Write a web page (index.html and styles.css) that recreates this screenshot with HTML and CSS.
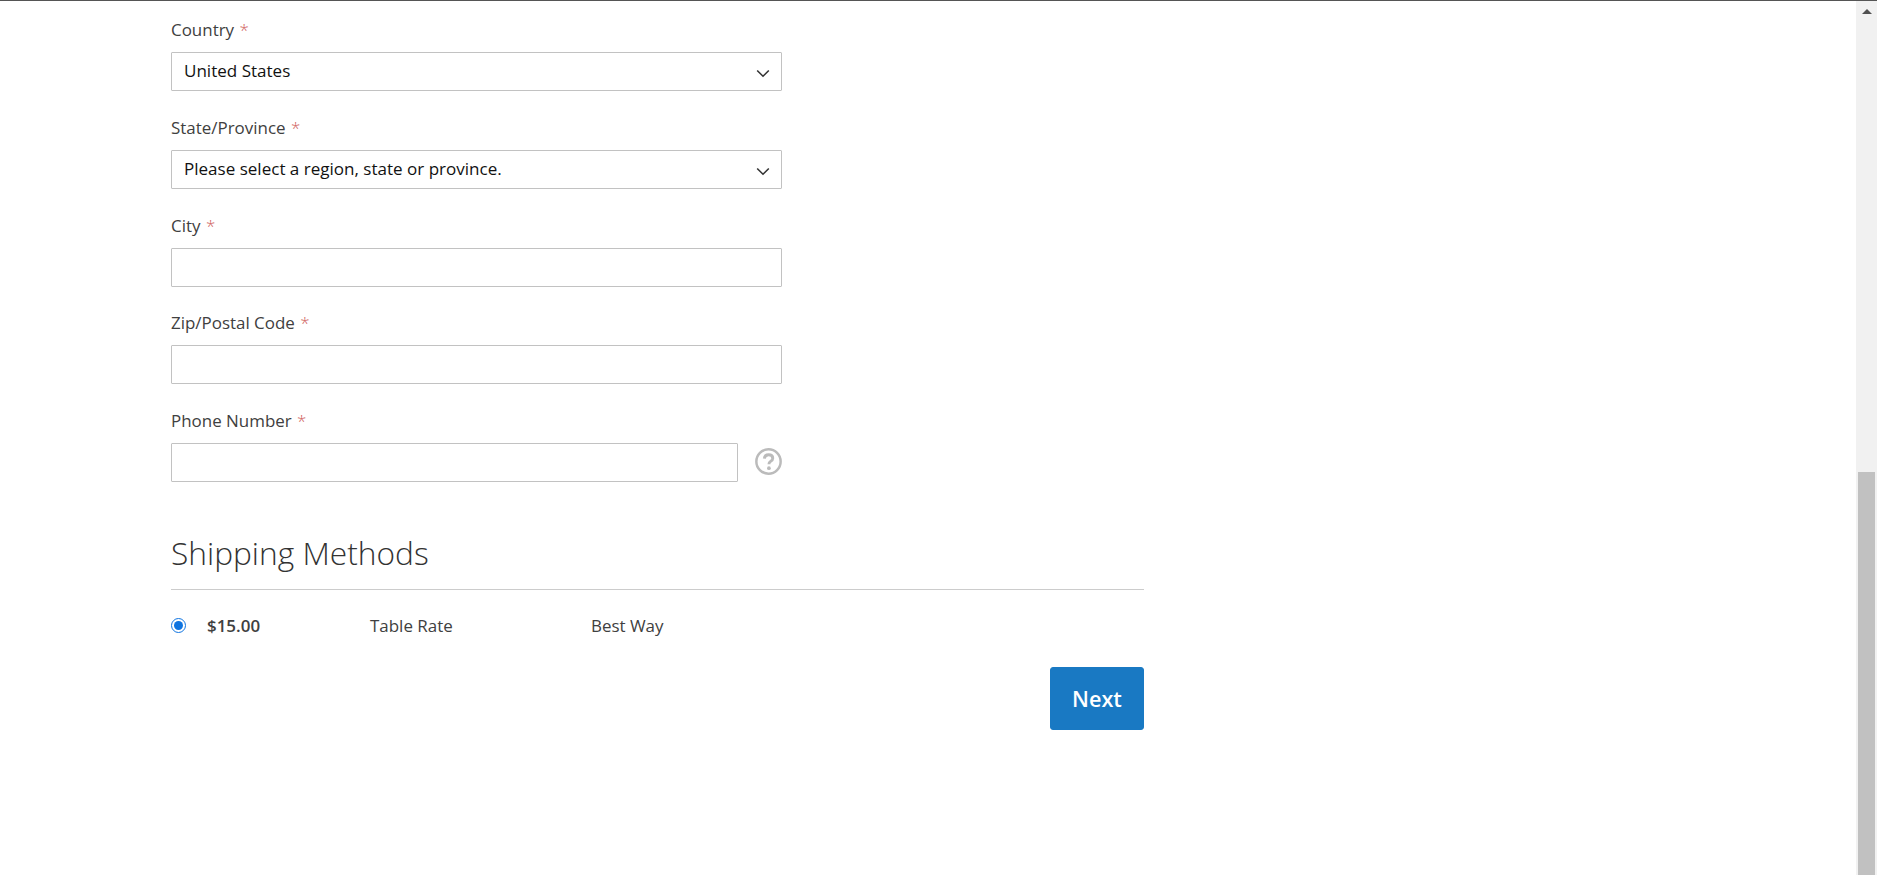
FILE: index.html
```html
<!DOCTYPE html>
<html lang="en">
<head>
    <meta charset="UTF-8">
    <title>Checkout</title>
    <link rel="stylesheet" href="styles.css">
</head>
<body>
    <div class="page">
        <main class="checkout">
            <form class="address-form">
                <div class="field">
                    <label class="field-label" for="country">Country <span class="req">*</span></label>
                    <div class="select-wrap">
                        <select id="country"><option>United States</option></select>
                        <svg class="chevron" viewBox="0 0 14 9"><path d="M1.2 1.5 7 7.2l5.8-5.7" fill="none" stroke="#333" stroke-width="1.6"/></svg>
                    </div>
                </div>
                <div class="field">
                    <label class="field-label" for="region">State/Province <span class="req">*</span></label>
                    <div class="select-wrap">
                        <select id="region"><option>Please select a region, state or province.</option></select>
                        <svg class="chevron" viewBox="0 0 14 9"><path d="M1.2 1.5 7 7.2l5.8-5.7" fill="none" stroke="#333" stroke-width="1.6"/></svg>
                    </div>
                </div>
                <div class="field">
                    <label class="field-label" for="city">City <span class="req">*</span></label>
                    <input id="city" type="text">
                </div>
                <div class="field">
                    <label class="field-label" for="zip">Zip/Postal Code <span class="req">*</span></label>
                    <input id="zip" type="text">
                </div>
                <div class="field">
                    <label class="field-label" for="phone">Phone Number <span class="req">*</span></label>
                    <div class="phone-row">
                        <input id="phone" type="text">
                        <svg class="help" viewBox="0 0 26 26">
                            <circle cx="13" cy="13" r="11.7" fill="none" stroke="#bbb" stroke-width="2.4"/>
                            <path d="M9 10.2c.2-2.400 1.900-3.700 4.100-3.700 2.300 0 4 1.300 4 3.300 0 1.600-1 2.400-2.100 3.100-1 .7-1.600 1.300-1.600 2.800" fill="none" stroke="#bbb" stroke-width="2.800"/>
                            <circle cx="13.400" cy="19.400" r="1.800" fill="#bbb"/>
                        </svg>
                    </div>
                </div>
            </form>

            <section class="shipping">
                <h2>Shipping Methods</h2>
                <div class="method-row">
                    <input class="method-radio" type="radio" name="method" checked>
                    <span class="method-price">$15.00</span>
                    <span class="method-name">Table Rate</span>
                    <span class="method-carrier">Best Way</span>
                </div>
                <div class="actions">
                    <button type="button" class="next-btn">Next</button>
                </div>
            </section>
        </main>

        <div class="scrollbar">
            <div class="scroll-up"></div>
            <div class="scroll-thumb"></div>
        </div>
    </div>
</body>
</html>
```

FILE: styles.css
```css
* {
    margin: 0;
    padding: 0;
    box-sizing: border-box;
}

html, body {
    height: 100%;
    overflow: hidden;
}

body {
    background: #fff;
    font-family: 'Open Sans', sans-serif;
    font-size: 16.95px;
    color: #404040;
}

.page {
    display: flex;
    height: 100vh;
    border-top: 1px solid #555;
}

.checkout {
    flex: 1;
    padding: 17px 0 0 171px;
}

.address-form {
    width: 611px;
}

.field {
    margin-bottom: 24.8px;
}

.field:last-child {
    margin-bottom: 0;
}

.field-label {
    display: block;
    line-height: 24px;
    margin-bottom: 10px;
}

.req {
    color: #d0605c;
    font-weight: 300;
    margin-left: 1px;
}

select, input[type="text"] {
    display: block;
    width: 100%;
    height: 39px;
    border: 1px solid #c2c2c2;
    background: #fff;
    font-family: 'Open Sans', sans-serif;
    font-size: 17.05px;
    color: #111;
    border-radius: 1px;
    outline: none;
}

select {
    appearance: none;
    padding: 0 30px 2px 12px;
}

.select-wrap {
    position: relative;
}

.chevron {
    position: absolute;
    top: 17px;
    right: 12px;
    width: 14px;
    height: 9px;
}

.phone-row {
    display: flex;
    align-items: center;
    gap: 17px;
}

.phone-row input {
    flex: 1;
    min-width: 0;
}

.help {
    width: 27px;
    height: 27px;
    flex: none;
    margin-bottom: 2px;
}

.shipping {
    width: 973px;
    margin-top: 50.6px;
}

h2 {
    font-size: 31.7px;
    font-weight: 300;
    line-height: 40px;
    padding-bottom: 16.2px;
    border-bottom: 1px solid #ccc;
    color: #333;
}

.method-row {
    display: flex;
    align-items: center;
    height: 24px;
    margin-top: 23.8px;
}

.method-radio {
    width: 15px;
    height: 15px;
    accent-color: #0f74e0;
    margin-left: 0;
    flex: none;
}

.method-price {
    margin-left: 21px;
    width: 163px;
    font-weight: 600;
}

.method-name {
    width: 221px;
}

.actions {
    display: flex;
    justify-content: flex-end;
    margin-top: 29px;
}

.next-btn {
    width: 94px;
    height: 63px;
    background: #1979c3;
    border: 1px solid #1979c3;
    border-radius: 3px;
    color: #fff;
    font-family: 'Open Sans', sans-serif;
    font-size: 21.6px;
    font-weight: 600;
}

.scrollbar {
    width: 21px;
    background: #f1f1f1;
    display: flex;
    flex-direction: column;
    align-items: center;
    justify-content: space-between;
}

.scroll-up {
    width: 0;
    height: 0;
    margin-top: 8px;
    border-left: 5px solid transparent;
    border-right: 5px solid transparent;
    border-bottom: 5px solid #505050;
}

.scroll-thumb {
    width: 17px;
    height: 403px;
    background: #c1c1c1;
}
```
